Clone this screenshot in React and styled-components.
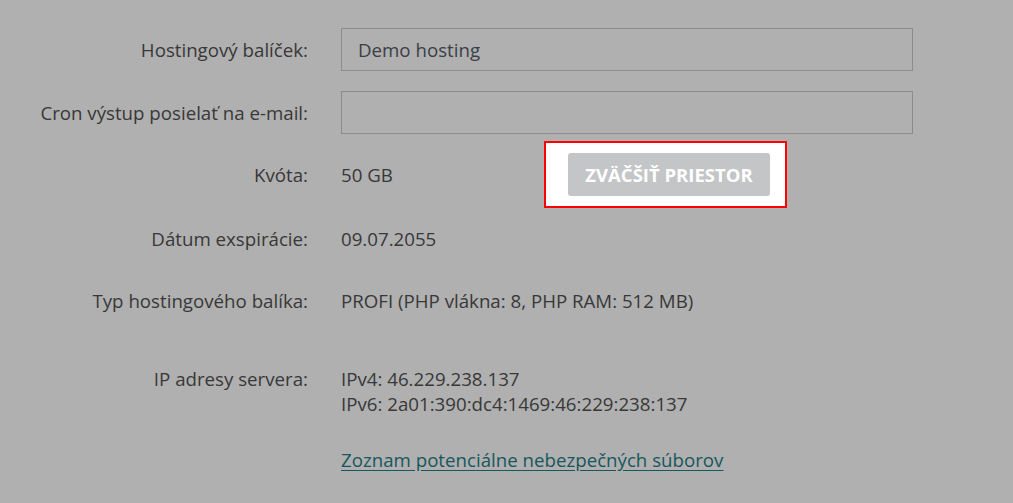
import React from 'react';
import styled, { createGlobalStyle } from 'styled-components';

const GlobalStyle = createGlobalStyle`
  html, body {
    margin: 0;
    padding: 0;
    background: #b0b0b0;
  }
  body {
    font-family: "Open Sans", "Noto Sans", sans-serif;
    font-size: 18.7px;
    color: #383838;
  }
`;

const Page = styled.div`
  display: flex;
  flex-direction: column;
  padding-top: 28px;
  width: 1013px;
  min-height: 503px;
  box-sizing: border-box;
`;

const Row = styled.div`
  display: grid;
  grid-template-columns: 308px 572px;
  column-gap: 33px;
  align-items: ${(p) => (p.$top ? 'start' : 'center')};
  min-height: ${(p) => p.$height || 25}px;
  margin-top: ${(p) => p.$gap || 0}px;
  line-height: 25px;
`;

const Label = styled.div`
  text-align: right;
  white-space: nowrap;
`;

const Value = styled.div`
  display: flex;
  flex-direction: column;
  white-space: nowrap;
`;

const Input = styled.input`
  box-sizing: border-box;
  width: 572px;
  height: 43px;
  border: 1px solid #8c8c8c;
  background: transparent;
  padding: 0 16px;
  font-family: inherit;
  font-size: 18.7px;
  color: #3a3f47;
  outline: none;
`;

const QuotaValue = styled.div`
  display: grid;
  grid-template-columns: 203px auto;
  align-items: center;
`;

const Highlight = styled.div`
  box-sizing: border-box;
  width: 243px;
  height: 67px;
  border: 2px solid #ff0000;
  background: #ffffff;
  display: flex;
  align-items: center;
  justify-content: center;
  padding-left: 7px;
`;

const Button = styled.button`
  box-sizing: border-box;
  height: 43px;
  width: 202px;
  padding: 0;
  border: none;
  border-radius: 3px;
  background: #c3c5c7;
  color: #ffffff;
  font-family: inherit;
  font-weight: 700;
  font-size: 18.5px;
  text-transform: uppercase;
  white-space: nowrap;
  cursor: pointer;
`;

const Link = styled.a`
  color: #17575d;
  text-decoration: underline;
  text-underline-offset: 3px;
`;

export default function App() {
  return (
    <>
      <GlobalStyle />
      <Page>
        <Row $height={43}>
          <Label>Hostingový balíček:</Label>
          <Input defaultValue="Demo hosting" readOnly />
        </Row>
        <Row $height={43} $gap={20}>
          <Label>Cron výstup posielať na e-mail:</Label>
          <Input defaultValue="" />
        </Row>
        <Row $height={67} $gap={7}>
          <Label>Kvóta:</Label>
          <QuotaValue>
            <span>50 GB</span>
            <Highlight>
              <Button>Zväčšiť priestor</Button>
            </Highlight>
          </QuotaValue>
        </Row>
        <Row $gap={18}>
          <Label>Dátum exspirácie:</Label>
          <Value>09.07.2055</Value>
        </Row>
        <Row $gap={37}>
          <Label>Typ hostingového balíka:</Label>
          <Value>PROFI (PHP vlákna: 8, PHP RAM: 512 MB)</Value>
        </Row>
        <Row $gap={53} $top>
          <Label>IP adresy servera:</Label>
          <Value>
            <span>IPv4: 46.229.238.137</span>
            <span>IPv6: 2a01:390:dc4:1469:46:229:238:137</span>
          </Value>
        </Row>
        <Row $gap={31}>
          <Label />
          <Value>
            <Link href="#">Zoznam potenciálne nebezpečných súborov</Link>
          </Value>
        </Row>
      </Page>
    </>
  );
}
